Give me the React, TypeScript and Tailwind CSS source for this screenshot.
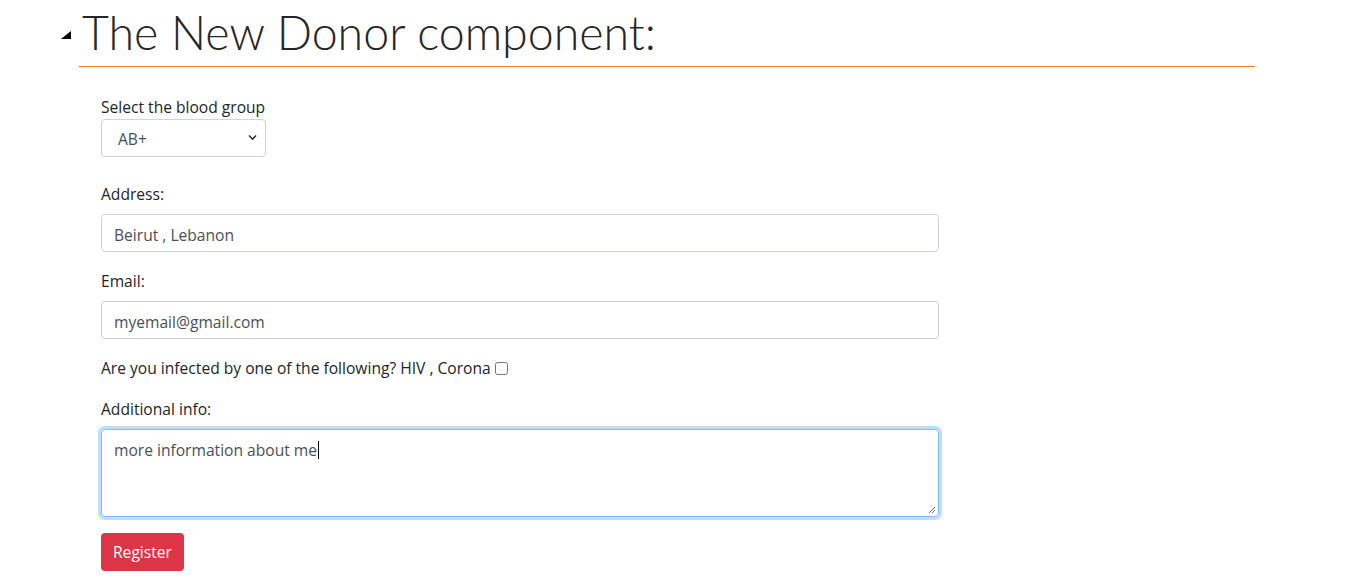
import { useState } from 'react'

const BLOOD_GROUPS = ['A+', 'A-', 'B+', 'B-', 'AB+', 'AB-', 'O+', 'O-']

function Field({ label, children, className = 'mb-[17px]' }: { label: string; children: React.ReactNode; className?: string }) {
  return (
    <div className={className}>
      <label className="block mb-2 leading-6 text-[#212529]">{label}</label>
      {children}
    </div>
  )
}

export default function App() {
  const [group, setGroup] = useState('AB+')
  const [address, setAddress] = useState('Beirut , Lebanon')
  const [email, setEmail] = useState('myemail@gmail.com')
  const [infected, setInfected] = useState(false)

  return (
    <div className="min-h-[586px] bg-white font-['Open_Sans',sans-serif] text-[15.6px] text-[#212529]">
      {/* Heading */}
      <div className="flex items-start pl-[61px] pt-[3px]">
        {/* collapse marker */}
        <svg className="mr-[11px] mt-[28px] shrink-0" width="10" height="8" viewBox="0 0 10 8">
          <polygon points="10,0 10,8 0,8" fill="#000" />
        </svg>
        <h1 className="font-['Lato',sans-serif] text-[46.5px] font-light leading-[58px] text-[#262626]">
          The New Donor component:
        </h1>
      </div>
      <div className="ml-[79px] mt-[5px] h-px w-[1176px] bg-[#ed7d31]" />

      {/* Form */}
      <form className="ml-[101px] mt-[28px] w-[838px]" onSubmit={e => e.preventDefault()}>
        <div className="mb-[25px]">
          <label className="block leading-6">Select the blood group</label>
          <div className="relative w-[165px]">
            <select
              value={group}
              onChange={e => setGroup(e.target.value)}
              className="h-[38px] w-full appearance-none rounded border border-[#ced4da] bg-white pl-4 pr-8 pt-[3px] text-[#495057] outline-none"
            >
              {BLOOD_GROUPS.map(g => (
                <option key={g} value={g}>{g}</option>
              ))}
            </select>
            <svg className="pointer-events-none absolute right-[9px] top-[15px]" width="9" height="7" viewBox="0 0 9 7">
              <path d="M1 1.5 L4.5 5 L8 1.5" fill="none" stroke="#333" strokeWidth="1.6" />
            </svg>
          </div>
        </div>

        <Field label="Address:">
          <input
            value={address}
            onChange={e => setAddress(e.target.value)}
            className="h-[38px] w-full rounded border border-[#ced4da] px-3 pt-[3px] text-[#495057] outline-none"
          />
        </Field>

        <Field label="Email:">
          <input
            type="email"
            value={email}
            onChange={e => setEmail(e.target.value)}
            className="h-[38px] w-full rounded border border-[#ced4da] px-3 pt-[3px] text-[#495057] outline-none"
          />
        </Field>

        <div className="mb-[17px] flex items-center leading-6">
          <span>Are you infected by one of the following? HIV , Corona</span>
          <input
            type="checkbox"
            checked={infected}
            onChange={e => setInfected(e.target.checked)}
            className="ml-[4px] h-[13px] w-[13px]"
          />
        </div>

        <Field label="Additional info:" className="mb-4">
          <div className="relative h-[88px] w-full rounded border border-[#80bdff] px-3 pb-[6px] pt-[8px] leading-6 text-[#495057] shadow-[0_0_0_3px_rgba(0,123,255,0.25)]">
            more information about me
            <span className="ml-px inline-block h-[18px] w-px translate-y-[3px] bg-black" />
            <svg className="absolute bottom-[2px] right-[2px]" width="8" height="8" viewBox="0 0 8 8">
              <path d="M7 1 L1 7 M7 4 L4 7" stroke="#777" strokeWidth="1" />
            </svg>
          </div>
        </Field>

        <button className="h-[38px] rounded bg-[#dc3545] px-3 pt-[2px] text-white">Register</button>
      </form>
    </div>
  )
}
